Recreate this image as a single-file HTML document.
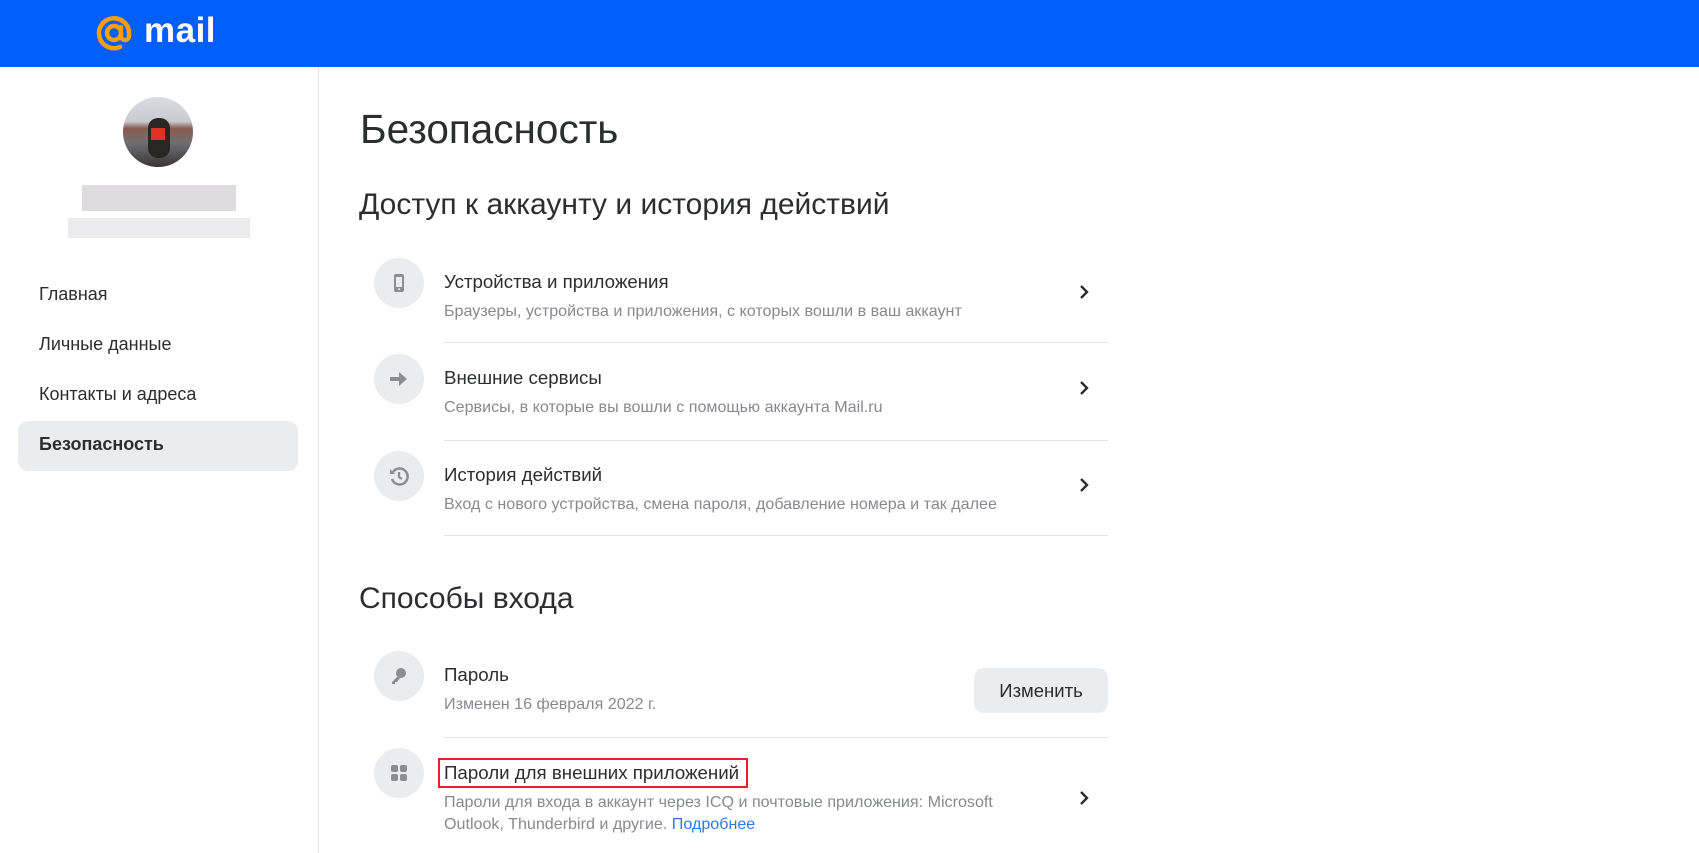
<!DOCTYPE html>
<html><head><meta charset="utf-8"><style>
*{margin:0;padding:0;box-sizing:border-box}
body{width:1699px;height:853px;overflow:hidden;background:#fff;font-family:"Liberation Sans",Arial,sans-serif;color:#2c2d2e;position:relative}
.a{position:absolute;white-space:nowrap}
.hdr{position:absolute;left:0;top:0;width:1699px;height:67px;background:#005ff9}
.side{position:absolute;left:318px;top:67px;width:1px;height:786px;background:#e3e4e8}
.nav{font-size:18px;left:39px}
.ic{position:absolute;width:50px;height:50px;border-radius:50%;background:#ebecef;left:374px}
.ic svg{position:absolute;left:13px;top:13px}
.t{font-size:18.7px;left:444px;color:#2c2d2e}
.s{font-size:16.1px;left:444px;color:#87898f}
.hr{position:absolute;left:444px;width:664px;height:1px;background:#e3e4e8}
.ch{position:absolute;left:1077px}
</style></head><body>
<div class="hdr"></div>
<svg class="a" style="left:93px;top:12px" width="42" height="42" viewBox="0 0 42 42"><circle cx="21" cy="21" r="7" fill="none" stroke="#ff9e00" stroke-width="4.5"/><path d="M28 15v9a4 4 0 0 0 8 0v-3A15 15 0 1 0 27 35" fill="none" stroke="#ff9e00" stroke-width="4.5" stroke-linecap="round"/></svg>
<div class="a" style="left:144px;top:11px;font-size:35px;font-weight:bold;color:#fff;letter-spacing:0.5px">mail</div>
<div class="side"></div>
<div class="a" style="left:123px;top:97px;width:70px;height:70px;border-radius:50%;background:linear-gradient(180deg,#d9dde2 0%,#c8cbd0 35%,#8a5a4e 45%,#6f6f72 65%,#3a3535 100%)"></div>
<div class="a" style="left:148px;top:118px;width:22px;height:40px;border-radius:10px;background:#2b2626"></div>
<div class="a" style="left:151px;top:128px;width:14px;height:12px;background:#e03028"></div>
<div class="a" style="left:82px;top:185px;width:154px;height:26px;background:#d6d3d6;opacity:.8"></div>
<div class="a" style="left:68px;top:218px;width:182px;height:20px;background:#e6e6ea;opacity:.8"></div>
<div class="a nav" style="top:284px">Главная</div>
<div class="a nav" style="top:334px">Личные данные</div>
<div class="a nav" style="top:384px">Контакты и адреса</div>
<div class="a" style="left:18px;top:421px;width:280px;height:50px;border-radius:10px;background:#ebecef"></div>
<div class="a nav" style="top:434px;font-weight:bold">Безопасность</div>

<div class="a" style="left:360px;top:106px;font-size:40.5px">Безопасность</div>
<div class="a" style="left:359px;top:188px;font-size:30px">Доступ к аккаунту и история действий</div>

<div class="ic" style="top:258px"><svg width="24" height="24" viewBox="0 0 24 24"><rect x="7" y="3" width="10" height="18" rx="2" fill="#8b8d92"/><rect x="9" y="6" width="6" height="10" fill="#ebecef"/><circle cx="12" cy="18.3" r="1" fill="#ebecef"/></svg></div>
<div class="a t" style="top:271px">Устройства и приложения</div>
<div class="a s" style="top:302px">Браузеры, устройства и приложения, с которых вошли в ваш аккаунт</div>
<svg class="ch" style="top:283px" width="14" height="18" viewBox="0 0 14 18"><path d="M4 3l6 6-6 6" fill="none" stroke="#2c2d2e" stroke-width="2.4"/></svg>
<div class="hr" style="top:342px"></div>

<div class="ic" style="top:354px"><svg width="24" height="24" viewBox="0 0 24 24"><path d="M3 10h9V5l8 7-8 7v-5H3z" fill="#8b8d92"/></svg></div>
<div class="a t" style="top:367px">Внешние сервисы</div>
<div class="a s" style="top:398px">Сервисы, в которые вы вошли с помощью аккаунта Mail.ru</div>
<svg class="ch" style="top:379px" width="14" height="18" viewBox="0 0 14 18"><path d="M4 3l6 6-6 6" fill="none" stroke="#2c2d2e" stroke-width="2.4"/></svg>
<div class="hr" style="top:440px"></div>

<div class="ic" style="top:451px"><svg width="24" height="24" viewBox="0 0 24 24"><path d="M6 8a8 8 0 1 1-1 7" fill="none" stroke="#8b8d92" stroke-width="2.5"/><path d="M3 5v5h5z" fill="#8b8d92"/><path d="M12 8v5l3 2" fill="none" stroke="#8b8d92" stroke-width="2.2"/></svg></div>
<div class="a t" style="top:464px">История действий</div>
<div class="a s" style="top:495px">Вход с нового устройства, смена пароля, добавление номера и так далее</div>
<svg class="ch" style="top:476px" width="14" height="18" viewBox="0 0 14 18"><path d="M4 3l6 6-6 6" fill="none" stroke="#2c2d2e" stroke-width="2.4"/></svg>
<div class="hr" style="top:535px"></div>

<div class="a" style="left:359px;top:582px;font-size:30px">Способы входа</div>

<div class="ic" style="top:651px"><svg width="24" height="24" viewBox="0 0 24 24"><circle cx="14" cy="9" r="5" fill="#8b8d92"/><path d="M11 12l-6 6v2h3v-2h2l3-4z" fill="#8b8d92"/></svg></div>
<div class="a t" style="top:664px">Пароль</div>
<div class="a s" style="top:695px">Изменен 16 февраля 2022 г.</div>
<div class="a" style="left:974px;top:668px;width:134px;height:45px;border-radius:10px;background:#ebecef;font-size:18.5px;text-align:center;line-height:45px">Изменить</div>
<div class="hr" style="top:737px"></div>

<div class="ic" style="top:748px"><svg width="24" height="24" viewBox="0 0 24 24"><rect x="4" y="4" width="7" height="7" rx="2" fill="#8b8d92"/><rect x="13" y="4" width="7" height="7" rx="2" fill="#8b8d92"/><rect x="4" y="13" width="7" height="7" rx="2" fill="#8b8d92"/><rect x="13" y="13" width="7" height="7" rx="2" fill="#8b8d92"/></svg></div>
<div class="a" style="left:438px;top:758px;width:310px;height:30px;border:2px solid #e8202a"></div>
<div class="a t" style="top:762px">Пароли для внешних приложений</div>
<div class="a s" style="top:793px">Пароли для входа в аккаунт через ICQ и почтовые приложения: Microsoft</div>
<div class="a s" style="top:815px">Outlook, Thunderbird и другие. <span style="color:#2e7ae6">Подробнее</span></div>
<svg class="ch" style="top:789px" width="14" height="18" viewBox="0 0 14 18"><path d="M4 3l6 6-6 6" fill="none" stroke="#2c2d2e" stroke-width="2.4"/></svg>
</body></html>
